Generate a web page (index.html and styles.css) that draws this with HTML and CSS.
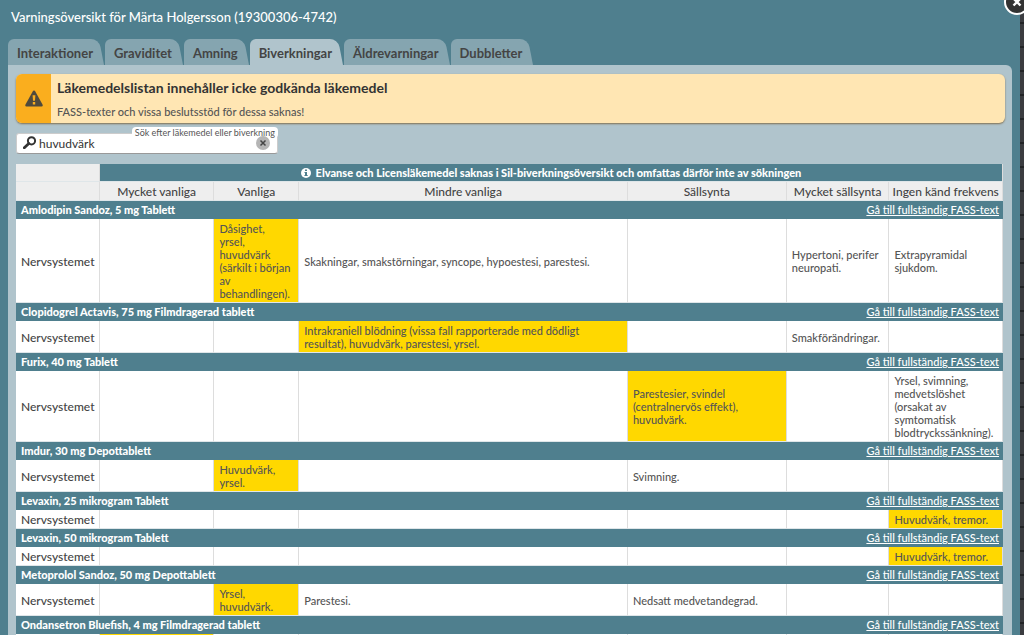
FILE: index.html
```
<!DOCTYPE html>
<html lang="sv">
<head>
<meta charset="utf-8">
<title>Varningsöversikt</title>
<link rel="stylesheet" href="styles.css">
</head>
<body>
<main class="dialog">
  <button class="dialog-close" type="button" aria-label="Stäng">
    <svg viewBox="0 0 28 28" width="28" height="28" aria-hidden="true"><circle cx="14" cy="14" r="12" fill="#333" stroke="#fff" stroke-width="2"/><path d="M10.500 10.500l7 7m0-7l-7 7" stroke="#fff" stroke-width="2.400"/></svg>
  </button>
  <h1 class="dialog-title">Varningsöversikt för Märta Holgersson (19300306-4742)</h1>
  <nav class="tabs">
    <button class="tab" type="button">Interaktioner</button>
    <button class="tab" type="button">Graviditet</button>
    <button class="tab" type="button">Amning</button>
    <button class="tab tab-active" type="button">Biverkningar</button>
    <button class="tab" type="button">Äldrevarningar</button>
    <button class="tab" type="button">Dubbletter</button>
  </nav>
  <section class="panel">
    <div class="notice">
      <div class="notice-icon">
        <svg viewBox="0 0 18 17" width="18" height="17" aria-hidden="true"><path d="M9 .5Q9.800.5 10.300 1.400L17.500 14.500Q18.300 16.500 16.500 16.500H1.500Q-.3 16.500.5 14.500L7.700 1.400Q8.200.5 9 .5Z" fill="#4f4a3c"/><path d="M7.600 5.300h2.800l-.4 5.500H8zM7.800 12h2.400v2.400H7.800z" fill="#faae1e"/></svg>
      </div>
      <div class="notice-body">
        <h2 class="notice-title">Läkemedelslistan innehåller icke godkända läkemedel</h2>
        <p class="notice-text">FASS-texter och vissa beslutsstöd för dessa saknas!</p>
      </div>
    </div>
    <div class="search">
      <svg class="search-icon" viewBox="0 0 14 13" width="14" height="13" aria-hidden="true"><circle cx="8.500" cy="4.800" r="3.600" fill="none" stroke="#333" stroke-width="2"/><path d="M5.800 7.500L1.300 11.700" stroke="#333" stroke-width="2.800" stroke-linecap="round"/></svg>
      <input class="search-input" id="search" type="text" value="huvudvärk">
      <label class="search-label" for="search">Sök efter läkemedel eller biverkning</label>
      <button class="search-clear" type="button" aria-label="Rensa">
        <svg viewBox="0 0 14 14" width="14" height="14" aria-hidden="true"><circle cx="7" cy="7" r="7" fill="#b5b5b5"/><path d="M4.500 4.500l5 5m0-5l-5 5" stroke="#444" stroke-width="1.500"/></svg>
      </button>
    </div>
    <table class="effects">
      <colgroup><col class="col-system"><col class="col-very-common"><col class="col-common"><col class="col-less-common"><col class="col-rare"><col class="col-very-rare"><col class="col-unknown"></colgroup>
      <thead>
        <tr class="info"><td></td><th colspan="6"><svg class="info-icon" viewBox="0 0 10 10" width="10" height="10" aria-hidden="true"><circle cx="5" cy="5" r="5" fill="#fff"/><path d="M4 1.500h2v1.500H4zM3.500 4H6v3h.7v1H3.400V7H4V5h-.5z" fill="#4f7f8e"/></svg>Elvanse och Licensläkemedel saknas i Sil-biverkningsöversikt och omfattas därför inte av sökningen</th></tr>
        <tr class="frequencies"><td></td><th>Mycket vanliga</th><th>Vanliga</th><th>Mindre vanliga</th><th>Sällsynta</th><th>Mycket sällsynta</th><th>Ingen känd frekvens</th></tr>
      </thead>
      <tbody>
        <tr class="drug"><th colspan="4">Amlodipin Sandoz, 5 mg Tablett</th><td colspan="3"><a href="#">Gå till fullständig FASS-text</a></td></tr>
        <tr class="effect"><th>Nervsystemet</th><td></td><td class="hit">Dåsighet, yrsel, huvudvärk (särkilt i början av behandlingen).</td><td>Skakningar, smakstörningar, syncope, hypoestesi, parestesi.</td><td></td><td>Hypertoni, perifer neuropati.</td><td>Extrapyramidal sjukdom.</td></tr>
        <tr class="drug"><th colspan="4">Clopidogrel Actavis, 75 mg Filmdragerad tablett</th><td colspan="3"><a href="#">Gå till fullständig FASS-text</a></td></tr>
        <tr class="effect"><th>Nervsystemet</th><td></td><td></td><td class="hit">Intrakraniell blödning (vissa fall rapporterade med dödligt resultat), huvudvärk, parestesi, yrsel.</td><td></td><td>Smakförändringar.</td><td></td></tr>
        <tr class="drug"><th colspan="4">Furix, 40 mg Tablett</th><td colspan="3"><a href="#">Gå till fullständig FASS-text</a></td></tr>
        <tr class="effect"><th>Nervsystemet</th><td></td><td></td><td></td><td class="hit">Parestesier, svindel (centralnervös effekt), huvudvärk.</td><td></td><td>Yrsel, svimning, medvetslöshet (orsakat av symtomatisk blodtryckssänkning).</td></tr>
        <tr class="drug"><th colspan="4">Imdur, 30 mg Depottablett</th><td colspan="3"><a href="#">Gå till fullständig FASS-text</a></td></tr>
        <tr class="effect"><th>Nervsystemet</th><td></td><td class="hit">Huvudvärk, yrsel.</td><td></td><td>Svimning.</td><td></td><td></td></tr>
        <tr class="drug"><th colspan="4">Levaxin, 25 mikrogram Tablett</th><td colspan="3"><a href="#">Gå till fullständig FASS-text</a></td></tr>
        <tr class="effect"><th>Nervsystemet</th><td></td><td></td><td></td><td></td><td></td><td class="hit">Huvudvärk, tremor.</td></tr>
        <tr class="drug"><th colspan="4">Levaxin, 50 mikrogram Tablett</th><td colspan="3"><a href="#">Gå till fullständig FASS-text</a></td></tr>
        <tr class="effect"><th>Nervsystemet</th><td></td><td></td><td></td><td></td><td></td><td class="hit">Huvudvärk, tremor.</td></tr>
        <tr class="drug"><th colspan="4">Metoprolol Sandoz, 50 mg Depottablett</th><td colspan="3"><a href="#">Gå till fullständig FASS-text</a></td></tr>
        <tr class="effect"><th>Nervsystemet</th><td></td><td class="hit">Yrsel, huvudvärk.</td><td>Parestesi.</td><td>Nedsatt medvetandegrad.</td><td></td><td></td></tr>
        <tr class="drug"><th colspan="4">Ondansetron Bluefish, 4 mg Filmdragerad tablett</th><td colspan="3"><a href="#">Gå till fullständig FASS-text</a></td></tr>
        <tr class="effect"><th></th><td class="hit"></td><td></td><td></td><td></td><td></td><td></td></tr>
      </tbody>
    </table>
  </section>
</main>
</body>
</html>
```
FILE: styles.css
```
* { box-sizing: border-box; }
body {
  margin: 0;
  height: 100vh;
  overflow: hidden;
  background: repeating-linear-gradient(#3b3c40 0 22px, #232427 22px 24px);
  color: #555;
  font: 500 11px/13px Lato, sans-serif;
}
button { border: 0; padding: 0; background: none; color: inherit; font: inherit; }
.dialog {
  position: relative;
  min-height: 100vh;
  margin-right: 4px;
  padding: 8px 8px 0;
  background: #4f7f8e;
}
.dialog-close { position: absolute; top: -12px; right: -11px; height: 28px; }
.dialog-title { margin: 0; padding: 0 3px; color: #fff; font-size: 13px; line-height: 18px; font-weight: 500; }
.tabs { display: flex; gap: 1px; margin-top: 13px; }
.tab {
  --tab-fill: #85a5b0;
  position: relative;
  z-index: 0;
  height: 26px;
  padding: 2px 11px 0 9px;
  color: #444;
  font-size: 13px;
  font-weight: 700;
}
.tab::before, .tab::after { content: ""; position: absolute; z-index: -1; top: 0; bottom: 0; background: var(--tab-fill); }
.tab::before { left: 0; right: 14px; border-top-left-radius: 6px; }
.tab::after { right: 0; width: 32px; border-top-right-radius: 8px; transform: skewX(11deg); transform-origin: bottom right; }
.tab-active { --tab-fill: #b0c4cc; }
.panel { padding: 9px 7px 0 8px; border-top-right-radius: 6px; background: #b0c4cc; }
.notice {
  display: flex;
  overflow: hidden;
  border-radius: 6px;
  background: #ffe6b3;
  box-shadow: 0 1px 2px #807050;
  height: 49px;
}
.notice-icon { display: flex; align-items: center; justify-content: center; width: 35px; background: #faae1e; }
.notice-body { padding: 5px 6px; }
.notice-title { margin: 0; color: #333; font-size: 14px; line-height: 18px; font-weight: 700; }
.notice-text { margin: 7px 0 0; line-height: 16px; }
.search { position: relative; display: flex; width: 262px; margin-top: 10px; }
.search-icon { position: absolute; left: 7px; top: 3px; }
.search-input {
  width: 100%;
  height: 21px;
  padding: 0 40px 1px 22px;
  border: 1px solid #ccc;
  border-bottom-color: #999;
  border-radius: 3px;
  background: #fff;
  color: #333;
  font: 12px Lato, sans-serif;
}
.search-label { position: absolute; top: -6px; right: 0; padding: 0 3px; border-radius: 4px; background: #fff; font-size: 9px; font-weight: 400; line-height: 11px; }
.search-clear { position: absolute; right: 8px; top: 3px; height: 14px; }
.effects { table-layout: fixed; width: calc(100% - 2px); margin-top: 10px; border-spacing: 0; background: #fff; }
.col-system { width: 8.500%; }
.col-very-common { width: 11.600%; }
.col-common { width: 8.600%; }
.col-less-common { width: 33.300%; }
.col-rare { width: 16.100%; }
.col-very-rare { width: 10.400%; }
.col-unknown { width: 11.500%; }
.effects th, .effects td { border-right: 1px solid #ddd; border-bottom: 1px solid #dfe6e9; }
.info td, .frequencies td, .frequencies th { background: #eee; }
.info th { height: 18px; padding: 0; font-weight: 900; background: #4f7f8e; color: #fff; }
.info-icon { margin-right: 5px; vertical-align: -1px; }
.frequencies th { height: 19px; padding: 0; color: #444; font-size: 12px; font-weight: 500; }
.effects .drug th, .effects .drug td { height: 18px; padding: 0 4px; border-right: 0; border-bottom-color: #4f7f8e; background: #4f7f8e; color: #fff; }
.effects .drug th { padding-left: 5px; text-align: left; font-weight: 900; }
.drug td { text-align: right; }
.drug a { color: #fff; }
.effect th, .effect td { height: 19px; padding: 3px 6px 2px 5px; text-align: left; }
.effect th { padding-right: 0; color: #444; font-size: 12px; font-weight: 500; }
.effect .hit { background: #ffd800; }
```
